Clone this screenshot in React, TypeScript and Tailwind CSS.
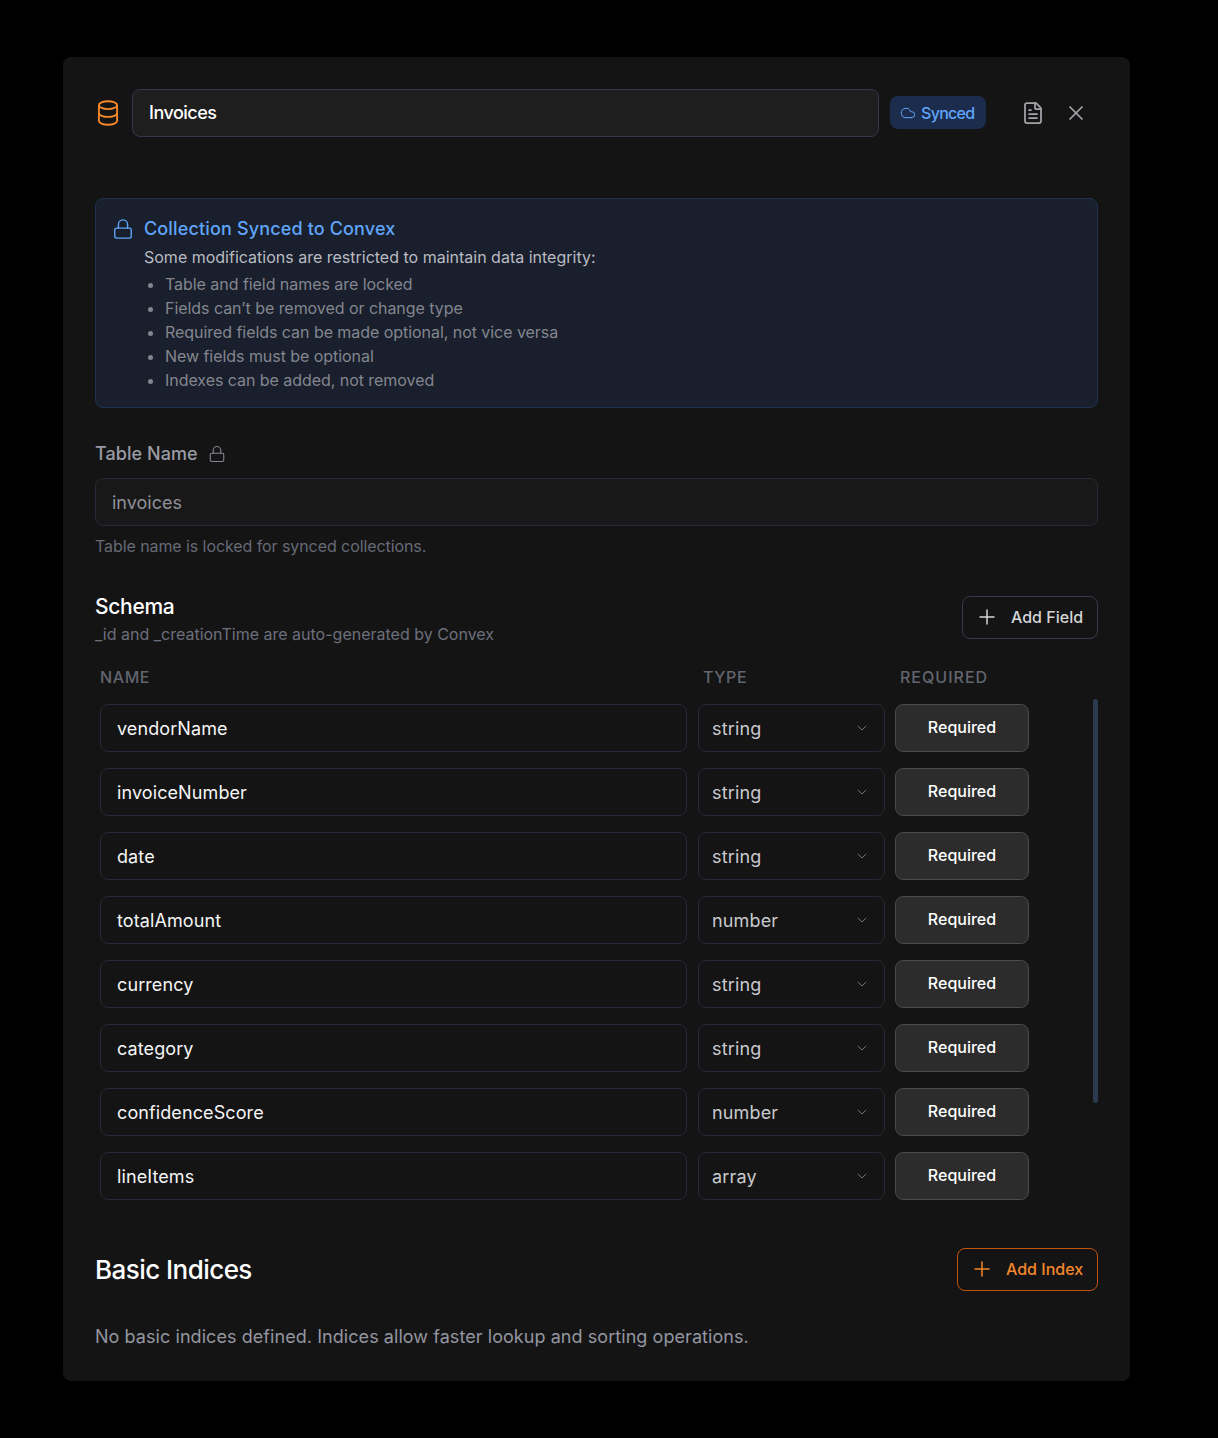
import { ChevronDown, Cloud, FileText, Lock, Plus, X } from "lucide-react";

const fields = [
  { name: "vendorName", type: "string" },
  { name: "invoiceNumber", type: "string" },
  { name: "date", type: "string" },
  { name: "totalAmount", type: "number" },
  { name: "currency", type: "string" },
  { name: "category", type: "string" },
  { name: "confidenceScore", type: "number" },
  { name: "lineItems", type: "array" },
];

const rules = [
  "Table and field names are locked",
  "Fields can’t be removed or change type",
  "Required fields can be made optional, not vice versa",
  "New fields must be optional",
  "Indexes can be added, not removed",
];

function StackIcon() {
  return (
    <svg viewBox="0 0 24 30" fill="none" stroke="currentColor" strokeWidth={2.2} className="ml-[2px] h-[26px] w-[22px] shrink-0 text-[#f5872b]">
      <ellipse cx="12" cy="6" rx="10.5" ry="4.5" />
      <path d="M1.5 6v18c0 2.5 4.7 4.5 10.5 4.5s10.5-2 10.5-4.5V6" />
      <path d="M1.5 15c0 2.5 4.7 4.5 10.5 4.5s10.5-2 10.5-4.5" />
    </svg>
  );
}

export default function App() {
  return (
    <div className="min-h-[1438px] bg-black pl-[63px] pt-[57px] font-['Inter',sans-serif]">
      <div className="h-[1324px] w-[1067px] rounded-lg bg-[#141414] px-[32px] pt-[32px]">
        {/* Header */}
        <div className="flex h-[48px] items-center">
          <StackIcon />
          <div className="ml-[13px] flex h-[48px] w-[747px] items-center rounded-lg border border-[#33384a] bg-[#1e1e1e] px-[16px] text-lg font-medium tracking-[-0.5px] text-white">
            Invoices
          </div>
          <div className="mb-[1px] ml-[11px] flex h-[33px] w-[96px] items-center gap-[5px] rounded-lg bg-[#1c2c4c] pl-[10px] text-base font-medium tracking-[-0.7px] text-[#60a5fa]">
            <Cloud className="h-4 w-4" strokeWidth={1.5} />
            Synced
          </div>
          <FileText className="mb-[1px] ml-[35px] h-[24px] w-[24px] shrink-0 text-[#a3a5ab]" strokeWidth={1.75} />
          <X className="mb-[1px] ml-[19px] h-[24px] w-[24px] shrink-0 text-[#a3a5ab]" strokeWidth={1.75} />
        </div>

        {/* Sync notice */}
        <div className="mt-[61px] flex h-[210px] rounded-lg border border-[#1d3150] bg-[#191f2c] pl-[16px] pt-[16px]">
          <Lock className="mt-[3px] h-[22px] w-[22px] shrink-0 text-[#60a5fa]" strokeWidth={1.5} />
          <div className="ml-[10px]">
            <div className="text-lg leading-[28px] font-medium tracking-[0.15px] text-[#60a5fa]">Collection Synced to Convex</div>
            <p className="text-base leading-[28px] text-[#b9bbc2]">Some modifications are restricted to maintain data integrity:</p>
            <ul className="ml-[21px] list-disc pt-[1px] text-base leading-[24px] tracking-[-0.05px] text-[#84868f]">
              {rules.map((rule) => (
                <li key={rule}>{rule}</li>
              ))}
            </ul>
          </div>
        </div>

        {/* Table name */}
        <div className="mt-[33px] flex h-[26px] items-center gap-[10px] text-lg font-medium tracking-[0.05px] text-[#9a9ca5]">
          Table Name
          <Lock className="h-[18px] w-[18px] text-[#84868f]" strokeWidth={1.5} />
        </div>
        <div className="mt-[11px] flex h-[48px] items-center rounded-lg border border-[#252a36] bg-[#181818] px-[16px] pt-[2px] text-lg text-[#8f9198]">
          invoices
        </div>
        <p className="mt-[8px] text-base leading-[24px] tracking-[-0.08px] text-[#666a77]">Table name is locked for synced collections.</p>

        {/* Schema */}
        <div className="mt-[34px] flex h-[46px] items-start justify-between">
          <div>
            <h2 className="text-[21px] leading-[30px] font-medium tracking-[-0.3px] text-white">Schema</h2>
            <p className="text-base leading-[24px] text-[#6c6f7c]">_id and _creationTime are auto-generated by Convex</p>
          </div>
          <button className="mt-[4px] flex h-[43px] w-[136px] items-center gap-[12px] rounded-lg border border-[#363b4b] pb-[1px] pl-[12px] text-base font-medium text-[#d5d5d8]">
            <Plus className="h-[24px] w-[24px]" strokeWidth={1.5} />
            Add Field
          </button>
        </div>

        <div className="relative mt-[25px]">
          <div className="flex h-[28px] items-center pl-[5px] text-base font-medium text-[#62656f]">
            <span className="w-[603px] tracking-[0.6px]">NAME</span>
            <span className="w-[197px] tracking-[0.6px]">TYPE</span>
            <span className="tracking-[1px]">REQUIRED</span>
          </div>
          <div className="mt-[13px] flex flex-col gap-[16px] pl-[5px]">
            {fields.map((field) => (
              <div key={field.name} className="flex h-[48px] items-center">
                <div className="flex h-[48px] w-[587px] items-center rounded-lg border border-[#252a36] px-[16px] pt-[2px] text-lg tracking-[0.1px] text-[#f5f5f5]">
                  {field.name}
                </div>
                <div className="ml-[11px] flex h-[48px] w-[187px] items-center justify-between rounded-lg border border-[#252a36] pl-[13px] pr-[14px] text-lg tracking-[0.15px] text-[#c8c9cd]">
                  <span className="pt-[2px]">{field.type}</span>
                  <ChevronDown className="h-[16px] w-[16px] text-[#6f717b]" strokeWidth={1.5} />
                </div>
                <button className="ml-[10px] h-[48px] w-[134px] rounded-lg border border-[#4a4a4c] bg-[#2c2c2c] pb-[2px] text-base font-medium text-white">
                  Required
                </button>
              </div>
            ))}
          </div>
          {/* Scrollbar thumb */}
          <div className="absolute right-0 top-[36px] h-[404px] w-[5px] rounded-full bg-[#2c3a50]" />
        </div>

        {/* Indices */}
        <div className="mt-[48px] flex h-[43px] items-center justify-between">
          <h2 className="text-[26px] font-medium tracking-[-0.55px] text-white">Basic Indices</h2>
          <button className="flex h-[43px] w-[141px] items-center gap-[12px] rounded-lg border border-[#c2540f] pb-[1px] pl-[12px] text-base font-medium text-[#f5872b]">
            <Plus className="h-[24px] w-[24px]" strokeWidth={1.5} />
            Add Index
          </button>
        </div>
        <p className="mt-[32px] text-lg leading-[28px] tracking-[0.06px] text-[#9496a0]">No basic indices defined. Indices allow faster lookup and sorting operations.</p>
      </div>
    </div>
  );
}
